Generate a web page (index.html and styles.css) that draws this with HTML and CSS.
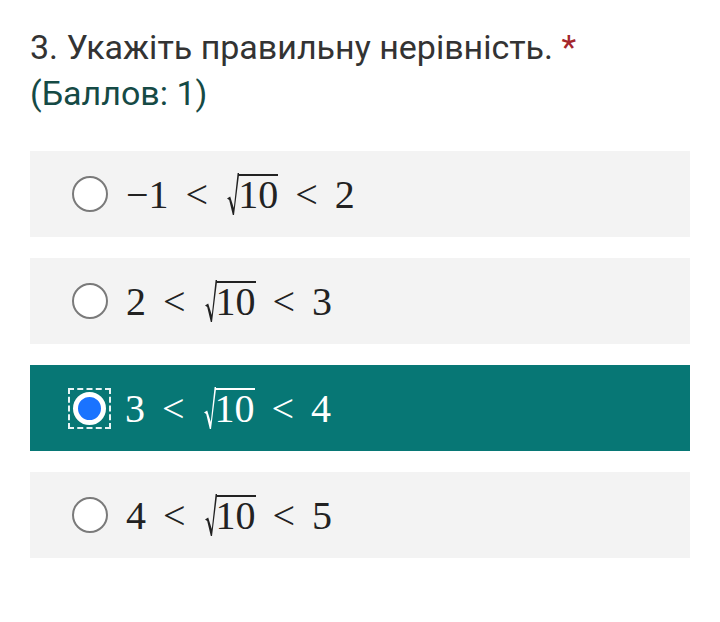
FILE: index.html
```html
<!DOCTYPE html>
<html lang="uk">
<head>
  <meta charset="UTF-8" />
  <meta name="viewport" content="width=device-width, initial-scale=1" />
  <title>Питання 3</title>
  <link rel="stylesheet" href="styles.css">
</head>
<body>
  <div class="question">
    <h2 class="title">3. Укажіть правильну нерівність. <span class="req">*</span></h2>
    <div class="points">(Баллов: 1)</div>

    <div class="options">
      <label class="option">
        <span class="radio"></span>
        <span class="math">&minus;1 &lt; <span class="sqrt"><svg class="root" viewBox="0 0 12 42" width="12" height="42"><path d="M0 25.5 L3.2 23.5 L6.8 35 L10.6 0 L12 0 L12 2 L7 42 L5.8 42 L2.2 27 Z"/></svg><span class="rad">10</span></span> &lt; 2</span>
      </label>
      <label class="option">
        <span class="radio"></span>
        <span class="math">2 &lt; <span class="sqrt"><svg class="root" viewBox="0 0 12 42" width="12" height="42"><path d="M0 25.5 L3.2 23.5 L6.8 35 L10.6 0 L12 0 L12 2 L7 42 L5.8 42 L2.2 27 Z"/></svg><span class="rad">10</span></span> &lt; 3</span>
      </label>
      <label class="option selected">
        <span class="focus"><span class="radio checked"></span></span>
        <span class="math">3 &lt; <span class="sqrt"><svg class="root" viewBox="0 0 12 42" width="12" height="42"><path d="M0 25.5 L3.2 23.5 L6.8 35 L10.6 0 L12 0 L12 2 L7 42 L5.8 42 L2.2 27 Z"/></svg><span class="rad">10</span></span> &lt; 4</span>
      </label>
      <label class="option">
        <span class="radio"></span>
        <span class="math">4 &lt; <span class="sqrt"><svg class="root" viewBox="0 0 12 42" width="12" height="42"><path d="M0 25.5 L3.2 23.5 L6.8 35 L10.6 0 L12 0 L12 2 L7 42 L5.8 42 L2.2 27 Z"/></svg><span class="rad">10</span></span> &lt; 5</span>
      </label>
    </div>
  </div>
</body>
</html>
```

FILE: styles.css
```css
body {
  margin: 0;
  background: #fff;
  font-family: Roboto, "Noto Sans", Arial, sans-serif;
}

.question {
  padding: 24px 30px 0 30px;
}

.title {
  margin: 0;
  font-size: 34px;
  font-weight: normal;
  color: #333;
  line-height: 46px;
}

.req {
  color: #a4262c;
}

.points {
  font-size: 34px;
  line-height: 46px;
  color: #154a45;
}

.options {
  margin-top: 35px;
  display: flex;
  flex-direction: column;
  gap: 21px;
}

.option {
  display: flex;
  align-items: center;
  height: 86px;
  background: #f3f3f3;
  padding-left: 42px;
  gap: 18px;
}

.option.selected {
  background: #077775;
  color: #fff;
}

.radio {
  box-sizing: border-box;
  width: 36px;
  height: 36px;
  border: 2px solid #7a7a7a;
  border-radius: 50%;
  background: #fff;
  flex: none;
}

.radio.checked {
  border: 5px solid #fff;
  background: #1a73ff;
  width: 33px;
  height: 33px;
}

.focus {
  box-sizing: border-box;
  border: 2px dashed #e8f4f4;
  padding: 2px 3px;
  margin-left: -4px;
  margin-right: -4px;
  display: flex;
}

.math {
  font-family: "Liberation Serif", "DejaVu Serif", serif;
  font-size: 40px;
  line-height: 1;
  word-spacing: 7px;
  color: #222;
}

.selected .math {
  color: #fff;
}

.sqrt {
  display: inline-block;
  margin-left: 2px;
  word-spacing: 0;
}

.root {
  vertical-align: -7px;
  fill: currentColor;
}

.rad {
  display: inline-block;
  line-height: 30px;
  border-top: 2px solid currentColor;
  padding-top: 4px;
  margin-left: -1px;
}
```
